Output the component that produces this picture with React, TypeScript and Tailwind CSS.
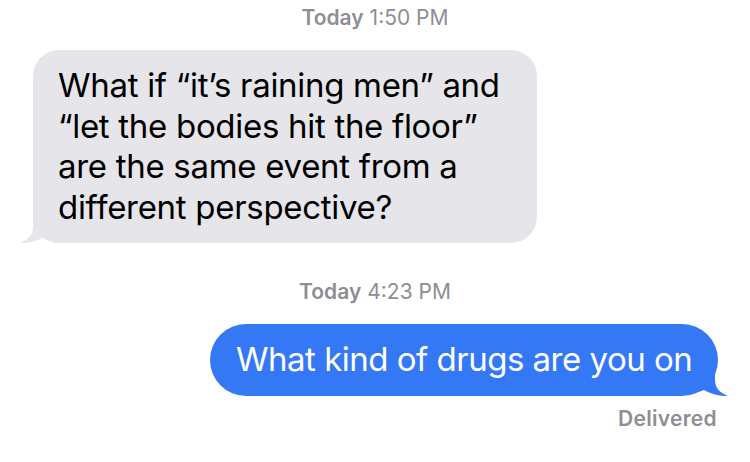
import React from "react";

export default function App() {
  return (
    <div
      className="w-[750px] h-[462px] bg-white overflow-hidden flex flex-col"
      style={{ fontFamily: "Inter, 'Noto Sans', sans-serif" }}
    >
      <div className="pt-[5px] h-[50px] text-center text-[21px] leading-[26px] text-[#8e8e93]">
        <span className="font-semibold">Today</span> <span>1:50 PM</span>
      </div>
      <div className="pl-[33px]">
        <div className="relative w-[504px] h-[193px] rounded-[26px] bg-[#e5e5ea] pl-[25px] pt-[15px] text-[33px] leading-[40.5px] text-black tracking-[-0.3px]">
          <svg className="absolute left-[-13px] bottom-0" width="40" height="30" viewBox="0 0 40 30">
            <path d="M13 0 L13 14 C13 22 8 27 0 30 C9 30.5 17 28 24 24 C28 26 33 27 40 27 L40 0 Z" fill="#e5e5ea" />
          </svg>
          <span className="relative">
            What if “it’s raining men” and
            <br />
            “let the bodies hit the floor”
            <br />
            are the same event from a
            <br />
            different perspective?
          </span>
        </div>
      </div>
      <div className="mt-[36px] h-[45px] text-center text-[21px] leading-[26px] text-[#8e8e93]">
        <span className="font-semibold">Today</span> <span>4:23 PM</span>
      </div>
      <div className="flex justify-end pr-[32px]">
        <div className="relative h-[72px] w-[508px] rounded-[36px] bg-[#3478f6] pl-[26px] flex items-center text-[33px] text-white tracking-[-0.5px]">
          <svg className="absolute right-[-10px] bottom-0" width="40" height="30" viewBox="0 0 40 30">
            <path d="M27 0 L27 14 C27 22 32 27 40 30 C31 30.5 23 28 16 24 C12 26 7 27 0 27 L0 0 Z" fill="#3478f6" />
          </svg>
          <span className="relative">What kind of drugs are you on</span>
        </div>
      </div>
      <div className="flex justify-end pr-[33px] pt-[10px] text-[21px] leading-[26px] font-semibold text-[#8e8e93] tracking-[0.3px]">
        Delivered
      </div>
    </div>
  );
}
